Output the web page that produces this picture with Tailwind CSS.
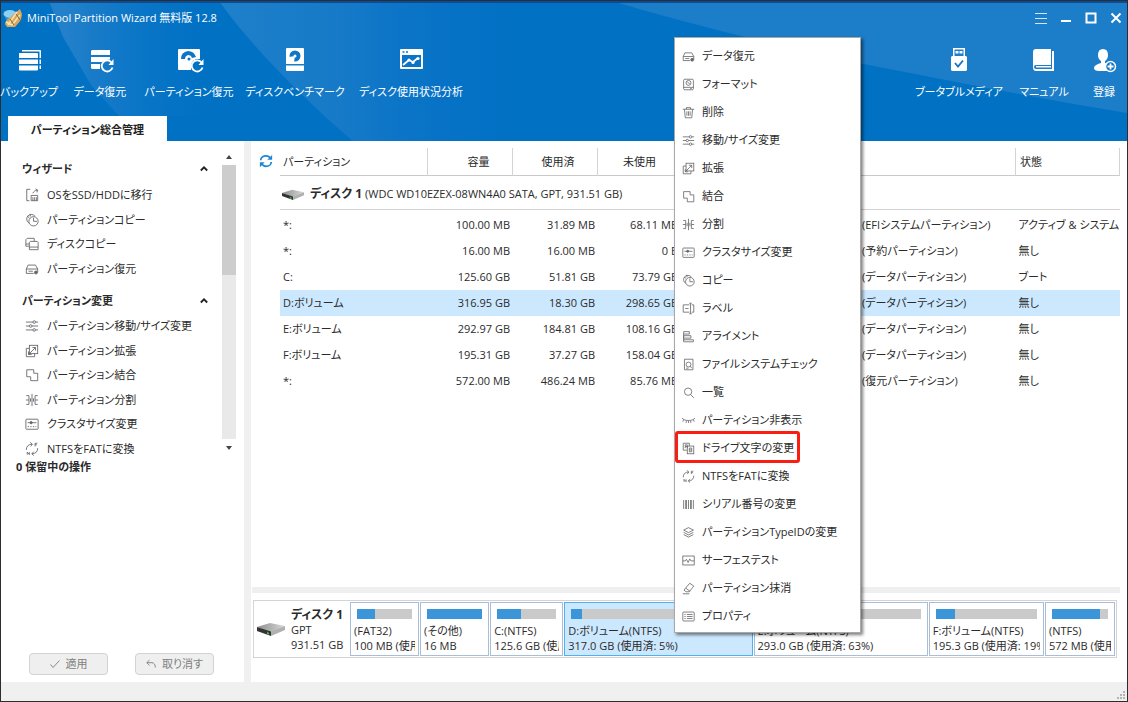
<!DOCTYPE html>
<html lang="ja">
<head>
<meta charset="utf-8">
<meta name="viewport" content="width=device-width, initial-scale=1">
<title>MiniTool Partition Wizard</title>
<script src="https://cdn.jsdelivr.net/npm/@tailwindcss/browser@4"></script>
</head>
<body class="bg-white">
<svg class="absolute size-0" aria-hidden="true">
  <defs>
    <linearGradient id="beamA" x1="0" x2="1"><stop offset="0.1" stop-color="#2380ca"/><stop offset="1" stop-color="#0272c6" stop-opacity="0"/></linearGradient>
    <linearGradient id="beamB" x1="0" x2="1"><stop offset="0" stop-color="#1f80ca"/><stop offset="0.4" stop-color="#167ac8"/><stop offset="1" stop-color="#0a70c8" stop-opacity="0"/></linearGradient>
    <linearGradient id="metal" x1="0" x2="1"><stop offset="0" stop-color="#8e8e8e"/><stop offset="1" stop-color="#d8d8d8"/></linearGradient>
  </defs>
  <symbol id="disk" viewBox="0 0 28 16"><path d="M0 6 13 2l15 3-14 6z" fill="url(#metal)"/><path d="M14 10.500 28 5v4l-14 6z" fill="#b0b0b0"/><path d="M0 6l14 4.500V15L0 10z" fill="#333"/><path d="M10 11l2 .7v2l-2-.7z" fill="#37c837"/></symbol>
  <symbol id="recover" viewBox="0 0 16 16"><path d="M1.500 8l2-4.500h8.500L14.500 8v4M1.500 8v5H10M1.500 8h13M4 10.500h5"/><circle cx="12.500" cy="12" r="1.700" fill="#666"/></symbol>
  <symbol id="format" viewBox="0 0 16 16"><rect x="2" y="1.500" width="12" height="13" rx="1.500"/><circle cx="8" cy="6" r="3"/><path d="M2 11.500h12M6.500 4.500l3 3M10 13h2"/></symbol>
  <symbol id="trash" viewBox="0 0 16 16"><path d="M1 4h14M5.500 4V2h5v2M3 4l1 10.500h8L13 4M6 6.500v5.500M8 6.500v5.500M10 6.500v5.500"/></symbol>
  <symbol id="sliders" viewBox="0 0 16 16"><path d="M1 3.500h8M12 3.500h3M1 8h4M8 8h7M1 12.500h8M12 12.500h3"/><circle cx="10.500" cy="3.500" r="1.500"/><circle cx="6.500" cy="8" r="1.500"/><circle cx="10.500" cy="12.500" r="1.500"/></symbol>
  <symbol id="extend" viewBox="0 0 16 16"><path d="M5 5H1.500v9.500H11V11"/><rect x="5" y="1.500" width="9.500" height="9.500"/><path d="M4 12l8-8M8.500 4H12v3.500M4 8.500V12h3.500"/></symbol>
  <symbol id="merge" viewBox="0 0 16 16"><path d="M2 2h8v4h4.500v8.500h-8V10H2z"/></symbol>
  <symbol id="split" viewBox="0 0 16 16"><path d="M8 1v14M1.500 3h3v10h-3M14.500 3h-3v10h3M1 8h3.500M11.500 8H15M6.300 6v4M9.700 6v4"/></symbol>
  <symbol id="cluster" viewBox="0 0 16 16"><rect x="1" y="2.500" width="14" height="11.500" rx=".8"/><path d="M3 6.500h10M3 11h1.500M6 11h1.500M9 11h1.500M12 11h1"/><circle cx="7" cy="6.500" r="1.300" fill="#666"/></symbol>
  <symbol id="pie" viewBox="0 0 16 16"><path d="M4.500 11.500A5.300 5.300 0 1 1 11.500 3.800"/><circle cx="9.700" cy="9.500" r="5.300"/><path d="M9.700 5.500v4h4M2.500 3.500 5 5.500M6 1v3"/></symbol>
  <symbol id="label" viewBox="0 0 16 16"><path d="M9 3.500H1.500v9H9M12 3.500h2.500v9H12M10.500 1.500v13M9 1.500h3M9 14.500h3M4 8h4"/></symbol>
  <symbol id="align" viewBox="0 0 16 16"><path d="M2 2h7v3H2zM2 7h9v3H2zM2 12h12v2.500H2zM2 5v8"/></symbol>
  <symbol id="check-fs" viewBox="0 0 16 16"><path d="M3 1.500h10.500v13H3z"/><circle cx="8" cy="8" r="3"/><path d="M10 10l2 2.500M5 12.500h3"/></symbol>
  <symbol id="search" viewBox="0 0 16 16"><circle cx="7.500" cy="7" r="4.500"/><path d="M10.500 10.500l4 4"/></symbol>
  <symbol id="hide" viewBox="0 0 16 16"><path d="M0 5c3 4 13 4 16 0M2 7l-1 2.500M5.500 8.200 5 11M8 8.300V11M10.500 8.200 11 11M14 7l1 2.500"/></symbol>
  <symbol id="letter" viewBox="0 0 16 16"><path d="M6 10H1.500V1.500H9V5"/><rect x="6.500" y="5" width="8" height="9.500"/><path d="M4 7.500V3.500h2.500v4M4 5.500h2.500M9 7.500v4.500h3V7.500zM9 9.700h3"/></symbol>
  <symbol id="convert" viewBox="0 0 16 16"><path d="M1.500 9C1.500 5 4 2.500 8 2.500M14.500 7c0 4-2.500 6.500-6.500 6.500"/><path d="M6 .5l2.500 2L6.500 5M10 11l-2.300 2.500L10 15.500M2.500 14.500v-3l2.500 3v-3M11.500 5V1.500H14M11.500 3.200h2"/></symbol>
  <symbol id="serial" viewBox="0 0 16 16"><path d="M2 2.500v11M14 2.500v11"/><path d="M5 2.500v11M11 2.500v11" stroke-width="1.800"/><path d="M8 2.500v11"/></symbol>
  <symbol id="layers" viewBox="0 0 16 16"><path d="M8 2l6 3-6 3.200L2 5zM2 7.800 8 11l6-3.200M2 10.500 8 13.700l6-3.200"/></symbol>
  <symbol id="surface" viewBox="0 0 16 16"><rect x="1" y="2.500" width="14" height="11"/><path d="M1 8.500h3l1.500-2 2 4L9.500 6l1.500 2.500h4"/></symbol>
  <symbol id="wipe" viewBox="0 0 16 16"><path d="M4 8 9.500 1.500l5 3.500L9 12H5L2.500 10zM4.500 7.500l5.500 4M1 14.500h8"/></symbol>
  <symbol id="props" viewBox="0 0 16 16"><rect x="1" y="2.500" width="14" height="11" rx="1"/><path d="M6 5.500h7M6 8h7M6 10.500h7M3 5.500h1.500M3 8h1.500M3 10.500h1.500"/></symbol>
  <symbol id="migrate" viewBox="0 0 16 16"><path d="M6 1.500H2v13h3M7 8.500h7.500v6H7zM9 10.500v4M11 10.500v4M13 10.500v4M9 6c1-2.500 2.500-3 5-3.500M12 1l2.500 1.300L13.500 5"/></symbol>
  <symbol id="copy-disk" viewBox="0 0 16 16"><path d="M4.500 10.500H1V3l1.500-1.500h8V5"/><path d="M5 6l1-1h8l1 1v8.500H5zM5 11.500h10M1 8h3.500"/></symbol>
</svg>

<div class="flex min-h-screen flex-col border border-[#2d2d30] bg-white font-['Open_Sans','Noto_Sans_CJK_JP',sans-serif] text-[11px] leading-4 text-[#2b2b2b] [font-feature-settings:'palt']">

  <header class="relative flex h-[140px] flex-col bg-[#0171c4] text-white">
    <svg class="absolute inset-0 h-full w-full" viewBox="0 0 1126 140" preserveAspectRatio="none" aria-hidden="true">
      <path d="M48 0 62 36 90 84 118 115H215L222 0z" fill="url(#beamA)"/>
      <path d="M218 0C248 42 300 96 352 140H520V0z" fill="url(#beamB)"/>
      <path d="M610 0C680 20 760 42 878 66 960 82 1040 98 1126 112V0z" fill="#1c7dc9"/>
      <path d="M0 0h1126v2H0z" fill="#0b4c96"/>
    </svg>
    <div class="relative flex h-[34px] items-center justify-between pr-[5px] pl-[2px]">
      <div class="flex items-center gap-1">
        <svg class="size-5" viewBox="0 0 20 20" aria-hidden="true"><ellipse cx="7" cy="6" rx="6.500" ry="4" fill="#8fd0f2"/><path d="M1 7c3 4 8 4 12-1l-1 5-8 2z" fill="#3c9ad8"/><path d="M3 13 12 5l5-4 2 5-1 6-6 7H4l-2-3z" fill="#d9a85c"/><path d="M5 17 14 4M9 17l8-10M3 14l6 3" stroke="#f8e6b8" stroke-width="1.500"/><path d="M13 6l5 7M7 11l4 6" stroke="#875f2d"/></svg>
        <h1>MiniTool Partition Wizard 無料版 12.8</h1>
      </div>
      <div class="flex items-center gap-[13px]">
        <button aria-label="メニュー"><svg class="size-3" viewBox="0 0 12 12" stroke="#d5e7f6" fill="none"><path d="M0 1.500h12M0 6.500h12M0 11.500h12"/></svg></button>
        <button aria-label="最小化"><svg class="size-3" viewBox="0 0 12 12"><path d="M1 8h10v2H1z" fill="#fff"/></svg></button>
        <button aria-label="最大化"><svg class="size-3" viewBox="0 0 12 12"><path d="M1.500 1.500h9v9h-9z" fill="none" stroke="#fff" stroke-width="2"/></svg></button>
        <button aria-label="閉じる"><svg class="size-3" viewBox="0 0 12 12"><path d="M1.500 1.500l9 9M10.500 1.500l-9 9" stroke="#fff" stroke-width="2"/></svg></button>
      </div>
    </div>
    <nav class="relative flex justify-between pt-[9px] pr-[9px] pl-[2px] whitespace-nowrap">
      <div class="flex gap-[18px]">
        <button class="flex w-[52px] flex-col items-center gap-2"><svg class="size-8" viewBox="0 0 32 32" fill="#fff"><path d="M9 6h18q1 0 1 1v7h-1.500V7.500H9zM6 9h18q1 0 1 1v4H6zM6 15.500h19V20H6zM6 21.500h19v4q0 1-1 1H7q-1 0-1-1zM26.500 15.500H28V20h-1.500zM26.500 21.500H28V25h-1.500z"/></svg>バックアップ</button>
        <button class="flex w-[54px] flex-col items-center gap-2"><svg class="size-8" viewBox="0 0 32 32" fill="#fff"><path d="M8 6h18v5H7V7zM7 13h19v2.500q-5 0-8 2.500H7zM7 20h9v5H8l-1-1z"/><path d="M27.500 18.500a5.500 5.500 0 1 0 1 5" fill="none" stroke="#fff" stroke-width="1.800"/><path d="M29.500 15v6h-5z"/></svg>データ復元</button>
        <button class="flex w-[88px] flex-col items-center gap-2"><svg class="size-8" viewBox="0 0 32 32" fill="#fff"><path d="M6 5h20q1 0 1 1v9q-8-1-9 7v4H6q-1 0-1-1V6q0-1 1-1z"/><path d="M8 15q0-7 7-8 6 0 8 6l-4 1q-1-3-4-3-3 1-3 4z" fill="#0e76c6"/><circle cx="16" cy="15" r="1.500" fill="#0e76c6"/><path d="M28.500 18.500a5.500 5.500 0 1 0 1 5" fill="none" stroke="#fff" stroke-width="1.800"/><path d="M30.500 15v6h-5z"/></svg>パーティション復元</button>
        <button class="flex w-[88px] flex-col items-center gap-2"><svg class="size-8" viewBox="0 0 32 32" fill="#fff"><path d="M8 4h16q1 0 1 1v15H7V5q0-1 1-1zM7 21.500h18V26q0 1-1 1H8q-1 0-1-1z"/><circle cx="16" cy="12" r="5.500" fill="#0e76c6"/><path d="M16 12l-6 1 1 5h4z"/><circle cx="16" cy="12" r="1.500"/></svg>ディスクベンチマーク</button>
        <button class="flex w-[108px] flex-col items-center gap-2"><svg class="size-8" viewBox="0 0 32 32" fill="#fff"><path fill-rule="evenodd" d="M6 5h21q1 0 1 1v18q0 1-1 1H6q-1 0-1-1V6q0-1 1-1zM7 11v12h19V11z"/><path d="M7.500 8h2M11 8h2" stroke="#0e76c6" stroke-width="1.500"/><path d="M8 21l6-5 4 2 5-4" fill="none" stroke="#fff" stroke-width="1.800"/><circle cx="14" cy="16" r="1.600"/><circle cx="18" cy="18.500" r="1.600"/><circle cx="23" cy="14.500" r="1.600"/></svg>ディスク使用状況分析</button>
      </div>
      <div class="flex gap-6">
        <button class="flex w-[78px] flex-col items-center gap-2"><svg class="size-8" viewBox="0 0 32 32" fill="#fff"><path fill-rule="evenodd" d="M10 4h12v8H10zM11.500 5.500V12h9V5.500z"/><path d="M12.500 7h3v2.500h-3zM16.500 7h3v2.500h-3zM9 12h14l1 1v13l-1 1H9l-1-1V13z"/><path d="M12 19l3 3.500 5-6" stroke="#1474c4" fill="none" stroke-width="1.800"/></svg>ブータブルメディア</button>
        <button class="flex w-11 flex-col items-center gap-2"><svg class="size-8" viewBox="0 0 32 32" fill="#fff"><path fill-rule="evenodd" d="M8 5h15v16H8q-2 0-2 2t2 2h16V7h2v20H8q-3 0-3-4V8q0-3 3-3z"/><path d="M8 22h15v1.500H8z"/></svg>マニュアル</button>
        <button class="flex w-7 flex-col items-center gap-2"><svg class="size-8" viewBox="0 0 32 32" fill="#fff"><path d="M15 5q5 0 5 6 0 4-3 6v2l3 1q-3 4 0 7H11q-5 0-5-3 0-3 7-5v-2q-3-2-3-6 0-6 5-6z"/><circle cx="22.500" cy="22.500" r="5" fill="#0e76c6" stroke="#fff" stroke-width="1.500"/><path d="M22.500 19.500v6M19.500 22.500h6" stroke="#fff" stroke-width="1.800"/></svg>登録</button>
      </div>
    </nav>
    <div class="relative mt-auto ml-[7px] flex h-[25px] w-[159px] items-center justify-center bg-white pt-[3px] font-bold text-[#222]">パーティション総合管理</div>
  </header>

  <div class="flex flex-1">
    <aside class="flex w-[243px] flex-col">
      <div class="mt-2 flex h-[308px] overflow-hidden pr-2">
        <div class="flex-1 pl-[21px] [&_a]:flex [&_a]:items-center [&_a]:gap-2 [&_li]:flex [&_li]:flex-1 [&_li]:items-center [&_li_svg]:size-[14px] [&_li_svg]:fill-none [&_li_svg]:stroke-[#666]">
          <button class="flex h-[34px] w-full items-center justify-between pt-1.5 pr-[14px] font-bold">ウィザード<svg class="size-2" viewBox="0 0 8 8" fill="none" stroke="#222" stroke-width="1.800"><path d="M.8 5.500 4 2.300l3.200 3.200"/></svg></button>
          <ul class="flex h-[98px] flex-col pl-[3px]">
            <li><a href="#"><svg><use href="#migrate"/></svg>OSをSSD/HDDに移行</a></li>
            <li><a href="#"><svg><use href="#pie"/></svg>パーティションコピー</a></li>
            <li><a href="#"><svg><use href="#copy-disk"/></svg>ディスクコピー</a></li>
            <li><a href="#"><svg><use href="#recover"/></svg>パーティション復元</a></li>
          </ul>
          <button class="flex h-[33px] w-full items-center justify-between pt-1.5 pr-[14px] font-bold">パーティション変更<svg class="size-2" viewBox="0 0 8 8" fill="none" stroke="#222" stroke-width="1.800"><path d="M.8 5.500 4 2.300l3.200 3.200"/></svg></button>
          <ul class="flex h-[147px] flex-col pl-[3px]">
            <li><a href="#"><svg><use href="#sliders"/></svg>パーティション移動/サイズ変更</a></li>
            <li><a href="#"><svg><use href="#extend"/></svg>パーティション拡張</a></li>
            <li><a href="#"><svg><use href="#merge"/></svg>パーティション結合</a></li>
            <li><a href="#"><svg><use href="#split"/></svg>パーティション分割</a></li>
            <li><a href="#"><svg><use href="#cluster"/></svg>クラスタサイズ変更</a></li>
            <li><a href="#"><svg><use href="#convert"/></svg>NTFSをFATに変換</a></li>
          </ul>
        </div>
        <div class="flex w-[14px] flex-col bg-[#e9e9e9]" aria-hidden="true">
          <div class="flex h-4 items-center justify-center bg-white"><svg class="h-1 w-1.5" viewBox="0 0 6 4"><path d="M3 0l3 4H0z" fill="#444"/></svg></div>
          <div class="h-[110px] bg-[#cdcdcd]"></div>
          <div class="mt-auto flex h-[18px] items-center justify-center bg-white"><svg class="h-1 w-1.5" viewBox="0 0 6 4"><path d="M0 0h6L3 4z" fill="#444"/></svg></div>
        </div>
      </div>
      <p class="pt-[2px] pl-[15px] font-bold">0 保留中の操作</p>
      <div class="mt-auto flex gap-[27px] pb-[7px] pl-7">
        <button class="flex h-[22px] w-[79px] items-center justify-center gap-1.5 rounded-sm border border-[#d3d3d3] bg-[#efefef] text-[#808080]"><svg class="size-[10px]" viewBox="0 0 10 10" fill="none" stroke="#888"><path d="M.5 5.500 3 8.500 9.500 1.500"/></svg>適用</button>
        <button class="flex h-[22px] w-[79px] items-center justify-center gap-1.5 rounded-sm border border-[#d3d3d3] bg-[#efefef] text-[#808080]"><svg class="size-[10px]" viewBox="0 0 10 10" fill="none" stroke="#888"><path d="M3.500 1 .8 3.700l2.700 2.600M.8 3.700H6Q9.300 4 9.300 8.500"/></svg>取り消す</button>
      </div>
    </aside>
    <div class="w-[7px] bg-[#f0f0f0]"></div>

    <main class="flex min-w-0 flex-1 flex-col">
      <div class="flex pt-[7px] pr-[7px]">
        <button class="mt-[6px] flex h-4 w-[29px] justify-center" aria-label="更新"><svg class="size-[14px]" viewBox="0 0 16 16" fill="none" stroke="#1f86d6" stroke-width="2"><path d="M2 7c0-3 3-5 6-5 2.500 0 4 1 5 3M14 9c0 3-3 5-6 5-2.500 0-4-1-5-3"/><path d="M15 1v5.500H9.500zM1 15V9.500h5.500z" fill="#1f86d6" stroke="none"/></svg></button>
        <table class="flex-1 table-fixed border-collapse whitespace-nowrap [&_tbody_tr]:h-[26px]">
          <colgroup><col class="w-[147px]"><col class="w-[85px]"><col class="w-[85px]"><col class="w-[85px]"><col class="w-[180px]"><col><col class="w-[104px]"></colgroup>
          <thead>
            <tr class="h-[27px] border-b border-[#c9c9c9] [&_th]:font-normal">
              <th class="border-r border-[#d4d4d4] pt-0.5 pl-[3px] text-left">パーティション</th>
              <th class="border-r border-[#d4d4d4] pt-0.5 pr-[22px] text-right">容量</th>
              <th class="border-r border-[#d4d4d4] pt-0.5 pr-[22px] text-right">使用済</th>
              <th class="pt-0.5 pr-[26px] text-right">未使用</th>
              <td></td>
              <td class="border-r border-[#d4d4d4]"></td>
              <th class="border-r border-[#d4d4d4] pt-0.5 pl-1 text-left">状態</th>
            </tr>
            <tr class="h-[34px] border-b border-[#d4d4d4]">
              <th colspan="7" class="pt-1 pl-[2px] text-left font-normal"><span class="flex items-center gap-[6px]"><svg class="h-[13px] w-[22px]"><use href="#disk"/></svg><span><b class="text-xs leading-4">ディスク 1</b> (WDC WD10EZEX-08WN4A0 SATA, GPT, 931.51 GB)</span></span></th>
            </tr>
          </thead>
          <tbody class="before:block before:h-[2px] [&_td]:p-0 [&_td:nth-child(1)]:pl-[3px] [&_td:nth-child(2)]:pr-[2px] [&_td:nth-child(2)]:text-right [&_td:nth-child(3)]:pr-[2px] [&_td:nth-child(3)]:text-right [&_td:nth-child(4)]:pr-1 [&_td:nth-child(4)]:text-right [&_td:nth-child(7)]:pl-[3px]">
            <tr><td>*:</td><td>100.00 MB</td><td>31.89 MB</td><td>68.11 MB</td><td></td><td>(EFIシステムパーティション)</td><td>アクティブ &amp; システム</td></tr>
            <tr><td>*:</td><td>16.00 MB</td><td>16.00 MB</td><td>0 B</td><td></td><td>(予約パーティション)</td><td>無し</td></tr>
            <tr><td>C:</td><td>125.60 GB</td><td>51.81 GB</td><td>73.79 GB</td><td></td><td>(データパーティション)</td><td>ブート</td></tr>
            <tr class="bg-[#cce8ff]"><td>D:ボリューム</td><td>316.95 GB</td><td>18.30 GB</td><td>298.65 GB</td><td></td><td>(データパーティション)</td><td>無し</td></tr>
            <tr><td>E:ボリューム</td><td>292.97 GB</td><td>184.81 GB</td><td>108.16 GB</td><td></td><td>(データパーティション)</td><td>無し</td></tr>
            <tr><td>F:ボリューム</td><td>195.31 GB</td><td>37.27 GB</td><td>158.04 GB</td><td></td><td>(データパーティション)</td><td>無し</td></tr>
            <tr><td>*:</td><td>572.00 MB</td><td>486.24 MB</td><td>85.76 MB</td><td></td><td>(復元パーティション)</td><td>無し</td></tr>
          </tbody>
        </table>
      </div>

      <div class="mt-auto mr-[7px] ml-[1px] h-[6px] bg-[#efefef]"></div>
      <section class="mt-[7px] mr-[10px] mb-6 ml-[2px] flex h-[58px] border border-[#d4d4d4] p-px leading-[15px] whitespace-nowrap">
        <div class="flex w-[95px] items-center gap-[6px] pl-[2px]">
          <svg class="h-4 w-7"><use href="#disk"/></svg>
          <p><b class="text-xs leading-[15px]">ディスク 1</b><br>GPT<br>931.51 GB</p>
        </div>
        <div class="grid flex-1 grid-cols-[69fr_69fr_73fr_188fr_174fr_115fr_70fr] gap-px [&>button]:flex [&>button]:min-w-0 [&>button]:flex-col [&>button]:border [&>button]:border-[#a9bdd6] [&>button]:px-[3px] [&>button]:pt-1.5 [&>button]:text-left [&>button>span:first-child]:mx-[3px] [&>button>span:first-child]:mb-1 [&>button>span:first-child]:block [&>button>span:first-child]:h-[10px] [&>button>span:first-child]:self-stretch [&>button>span:first-child]:bg-[#cacaca] [&>button>span:last-child]:w-full [&>button>span:last-child]:overflow-hidden">
          <button><span><i class="block h-full bg-[#3a96d8]" style="width:32%"></i></span><span>(FAT32)</span><span>100 MB (使用済: 32%)</span></button>
          <button><span><i class="block h-full bg-[#3a96d8]" style="width:100%"></i></span><span>(その他)</span><span>16 MB</span></button>
          <button><span><i class="block h-full bg-[#3a96d8]" style="width:41%"></i></span><span>C:(NTFS)</span><span>125.6 GB (使用済: 41%)</span></button>
          <button class="border-[#4fb0f5]! bg-[#cce8ff]"><span><i class="block h-full bg-[#3a96d8]" style="width:6%"></i></span><span>D:ボリューム(NTFS)</span><span>317.0 GB (使用済: 5%)</span></button>
          <button><span><i class="block h-full bg-[#3a96d8]" style="width:63%"></i></span><span>E:ボリューム(NTFS)</span><span>293.0 GB (使用済: 63%)</span></button>
          <button><span><i class="block h-full bg-[#3a96d8]" style="width:19%"></i></span><span>F:ボリューム(NTFS)</span><span>195.3 GB (使用済: 19%)</span></button>
          <button><span><i class="block h-full bg-[#3a96d8]" style="width:85%"></i></span><span>(NTFS)</span><span>572 MB (使用済: 85%)</span></button>
        </div>
      </section>
    </main>
  </div>

  <footer class="flex h-[19px] items-end justify-end bg-[#f0f0f0] p-px"><svg class="size-[9px]" viewBox="0 0 9 9" fill="#b5b5b5"><path d="M6 0h2v2H6zM3 3h2v2H3zM6 3h2v2H6zM0 6h2v2H0zM3 6h2v2H3zM6 6h2v2H6z"/></svg></footer>
</div>

<ul class="absolute top-[37px] left-[674px] w-[187px] border border-[#a8a8a8] bg-white pt-1 pb-[2px] font-['Open_Sans','Noto_Sans_CJK_JP',sans-serif] text-[11px] leading-4 whitespace-nowrap text-[#2b2b2b] shadow-[2px_2px_3px_rgba(0,0,0,0.5)] [font-feature-settings:'palt'] [&_button]:flex [&_button]:h-7 [&_button]:w-full [&_button]:items-center [&_button]:gap-[7px] [&_button]:pl-[7px] [&_svg]:size-[13px] [&_svg]:fill-none [&_svg]:stroke-[#666]">
  <li><button><svg><use href="#recover"/></svg>データ復元</button></li>
  <li><button><svg><use href="#format"/></svg>フォーマット</button></li>
  <li><button><svg><use href="#trash"/></svg>削除</button></li>
  <li><button><svg><use href="#sliders"/></svg>移動/サイズ変更</button></li>
  <li><button><svg><use href="#extend"/></svg>拡張</button></li>
  <li><button><svg><use href="#merge"/></svg>結合</button></li>
  <li><button><svg><use href="#split"/></svg>分割</button></li>
  <li><button><svg><use href="#cluster"/></svg>クラスタサイズ変更</button></li>
  <li><button><svg><use href="#pie"/></svg>コピー</button></li>
  <li><button><svg><use href="#label"/></svg>ラベル</button></li>
  <li><button><svg><use href="#align"/></svg>アライメント</button></li>
  <li><button><svg><use href="#check-fs"/></svg>ファイルシステムチェック</button></li>
  <li><button><svg><use href="#search"/></svg>一覧</button></li>
  <li><button><svg><use href="#hide"/></svg>パーティション非表示</button></li>
  <li class="relative"><button><svg><use href="#letter"/></svg>ドライブ文字の変更</button><span class="pointer-events-none absolute -top-[3px] left-0 h-8 w-[125px] rounded-[3px] border-3 border-[#fb1d12]"></span></li>
  <li><button><svg><use href="#convert"/></svg>NTFSをFATに変換</button></li>
  <li><button><svg><use href="#serial"/></svg>シリアル番号の変更</button></li>
  <li><button><svg><use href="#layers"/></svg>パーティションTypeIDの変更</button></li>
  <li><button><svg><use href="#surface"/></svg>サーフェステスト</button></li>
  <li><button><svg><use href="#wipe"/></svg>パーティション抹消</button></li>
  <li><button><svg><use href="#props"/></svg>プロパティ</button></li>
</ul>
</body>
</html>
